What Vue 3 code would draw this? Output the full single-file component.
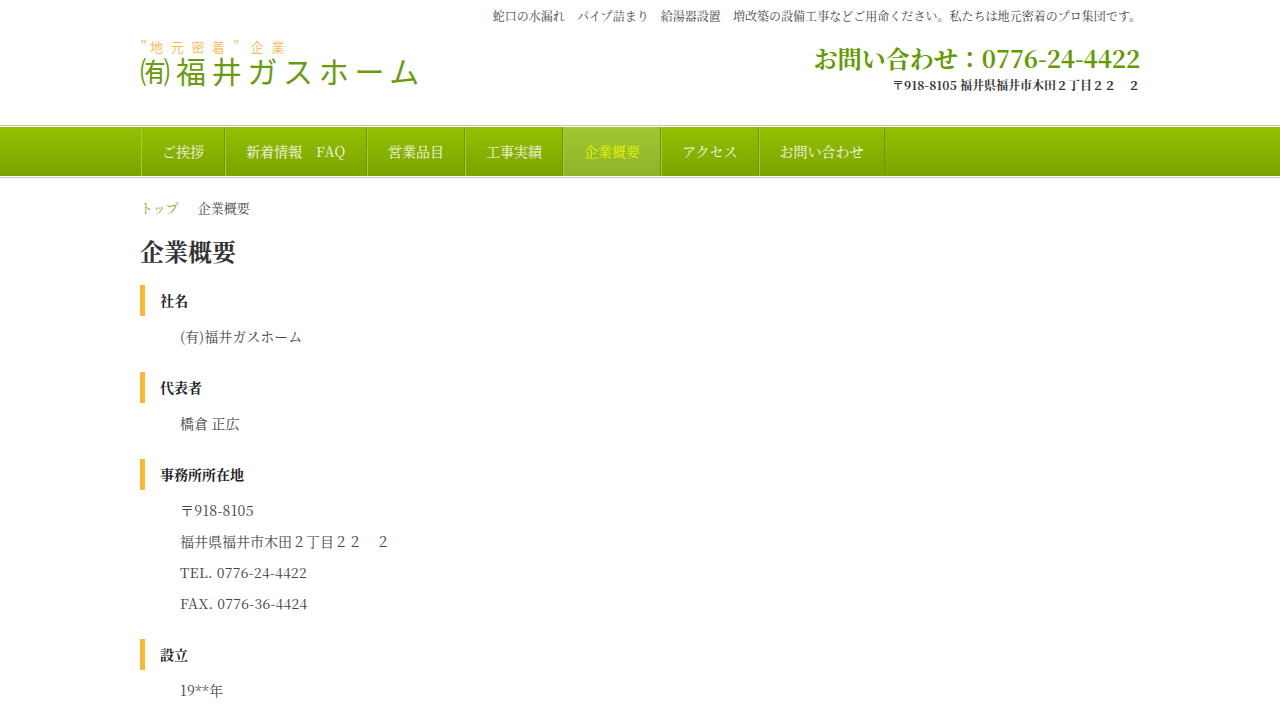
<script setup>
const navItems = [
  { label: 'ご挨拶' },
  { label: '新着情報　', latin: 'FAQ' },
  { label: '営業品目' },
  { label: '工事実績' },
  { label: '企業概要', active: true },
  { label: 'アクセス' },
  { label: 'お問い合わせ' },
]
const sections = [
  { title: '社名', lines: [{ text: '(有)福井ガスホーム' }] },
  { title: '代表者', lines: [{ text: '橋倉 正広' }] },
  {
    title: '事務所所在地',
    lines: [
      { text: '〒918-8105', latin: true },
      { text: '福井県福井市木田２丁目２２　２' },
      { text: 'TEL. 0776-24-4422', latin: true },
      { text: 'FAX. 0776-36-4424', latin: true },
    ],
  },
  { title: '設立', lines: [{ text: '19**年', latin: true }] },
]
</script>

<template>
  <div class="page">
    <header class="wrap header">
      <p class="tagline">蛇口の水漏れ　パイプ詰まり　給湯器設置　増改築の設備工事などご用命ください。私たちは地元密着のプロ集団です。</p>
      <div class="head-row">
        <div class="logo">
          <div class="logo-sub"><span class="q q-open">″</span>地元密着<span class="q q-close">″</span>企業</div>
          <div class="logo-main"><span class="logo-yu">㈲</span>福井ガスホーム</div>
        </div>
        <div class="contact">
          <div class="tel">お問い合わせ：<span class="tel-num">0776-24-4422</span></div>
          <div class="addr"><span class="addr-zip">〒918-8105</span> 福井県福井市木田２丁目２２　２</div>
        </div>
      </div>
    </header>

    <nav class="nav">
      <ul class="wrap nav-list">
        <li v-for="item in navItems" :key="item.label" class="nav-item" :class="{ active: item.active }">{{ item.label }}<span v-if="item.latin" class="nav-latin">{{ item.latin }}</span></li>
      </ul>
    </nav>

    <main class="wrap main">
      <div class="crumbs"><a class="crumb-link">トップ</a><span>企業概要</span></div>
      <h1 class="title">企業概要</h1>
      <section v-for="s in sections" :key="s.title" class="sec">
        <h2 class="sec-title">{{ s.title }}</h2>
        <div class="sec-body">
          <p v-for="line in s.lines" :key="line.text" :class="{ latin: line.latin }">{{ line.text }}</p>
        </div>
      </section>
    </main>
  </div>
</template>

<style>
html, body { margin: 0; background: #fff; overflow: hidden; }
</style>

<style scoped>
.page {
  height: 720px;
  overflow: hidden;
  font-family: "Noto Serif CJK JP", "Liberation Serif", "Noto Sans CJK JP", serif;
  color: #333;
}
.wrap { width: 1000px; margin: 0 auto; }
.header { height: 125px; }
.tagline {
  margin: 0 -1px 0 0;
  padding-top: 7px;
  text-align: right;
  font-size: 12px;
  line-height: 17px;
  letter-spacing: 0.03px;
  color: #444;
}
.head-row { display: flex; justify-content: space-between; padding-top: 15px; }
.logo { font-family: "Noto Sans CJK JP", sans-serif; font-weight: 400; }
.logo-sub {
  font-size: 13px;
  line-height: 15px;
  letter-spacing: 7.7px;
  color: #f9bd5c;
  white-space: nowrap;
}
.q {
  display: inline-block;
  font-family: "Liberation Sans", sans-serif;
  font-size: 15px;
  letter-spacing: 0;
  line-height: 15px;
  vertical-align: top;
  margin-top: -2px;
  padding-left: 1px;
  box-sizing: border-box;
}
.q-open { width: 10px; }
.q-close { width: 18px; }
.logo-main {
  font-size: 30px;
  line-height: 32px;
  letter-spacing: 5.7px;
  color: #6a9c10;
  white-space: nowrap;
}
.logo-yu { letter-spacing: 6px; }
.contact { text-align: right; }
.tel {
  font-size: 24px;
  line-height: 34px;
  font-weight: 700;
  color: #639a00;
  margin-top: 2px;
}
.tel-num { letter-spacing: -0.15px; }
.addr {
  font-size: 12px;
  line-height: 18px;
  font-weight: 700;
  color: #333;
  margin-top: 1px;
}
.addr-zip { letter-spacing: 0.2px; }
.nav {
  height: 49px;
  border-top: 1px solid #c4c4c4;
  border-bottom: 1px solid #c4c4c4;
  padding: 1px 0;
  background-clip: content-box;
  background-image: linear-gradient(#95c102, #7aa300);
  box-sizing: content-box;
}
.nav-list {
  list-style: none;
  padding: 0 0 0 1px;
  box-sizing: border-box;
  display: flex;
  height: 49px;
}
.nav-item {
  padding: 0 20px;
  font-size: 14px;
  line-height: 49px;
  color: #f4f7e8;
  border-left: 1px solid #a7cc33;
  border-right: 1px solid #6f9600;
  white-space: nowrap;
}
.nav-latin { letter-spacing: 0.65px; }
.nav-item.active {
  background: linear-gradient(#a0c830, #8fb22c);
  color: #e4f500;
}
.main { padding-top: 20px; }
.crumbs { font-size: 13px; line-height: 20px; color: #444; }
.crumb-link { color: #7fa51e; margin-right: 19px; }
.title {
  margin: 15px 0 0;
  font-size: 24px;
  line-height: 36px;
  font-weight: 700;
  color: #333;
}
.sec { margin-top: 16px; }
.sec + .sec { margin-top: 20px; }
.sec-title {
  margin: 0;
  height: 31px;
  border-left: 5px solid #fdb92d;
  padding-left: 15px;
  font-size: 14px;
  line-height: 31px;
  font-weight: 700;
  color: #222;
}
.sec-body { padding: 5px 0 0 40px; }
.sec-body p {
  margin: 0;
  font-size: 14px;
  line-height: 31px;
  color: #444;
}
.sec-body p.latin { letter-spacing: 0.3px; }
</style>
